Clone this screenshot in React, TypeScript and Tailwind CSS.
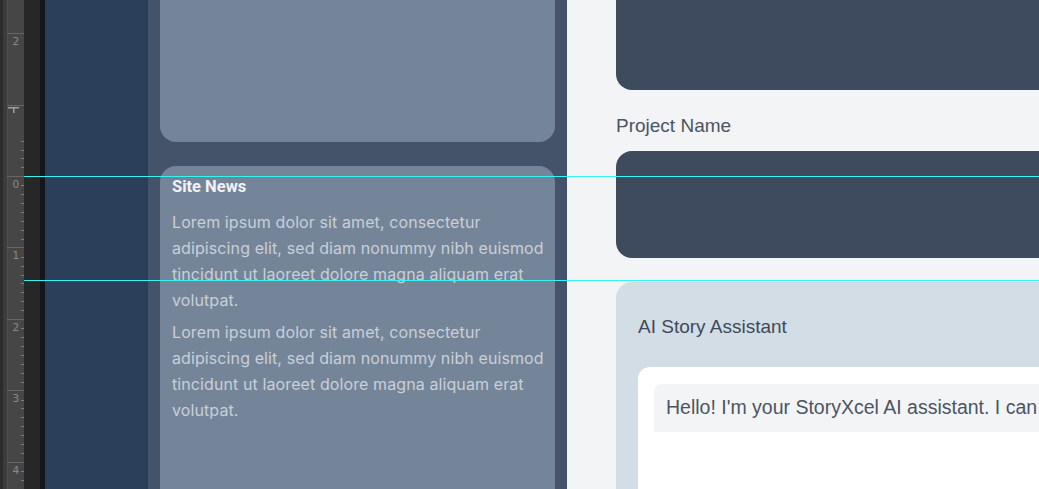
import React from "react";

const majors = [
  { y: 33, label: "2" },
  { y: 105, label: "" },
  { y: 176, label: "0" },
  { y: 247, label: "1" },
  { y: 319, label: "2" },
  { y: 390, label: "3" },
  { y: 462, label: "4" },
];

function Ruler() {
  const minors: number[] = [];
  for (let i = -4; i < 40; i++) {
    const y = 176.3 + i * 8.93;
    if (i % 8 !== 0 && y > 0 && y < 489) minors.push(y);
  }

  return (
    <svg width="24" height="489" className="shrink-0 block" viewBox="0 0 24 489">
      <rect x="0" y="0" width="3" height="489" fill="#2c2c2c" />
      <rect x="3" y="0" width="4" height="489" fill="#3b3b3b" />
      <rect x="7" y="0" width="17" height="489" fill="#464646" />
      <rect x="7" y="0" width="1" height="489" fill="#505050" />
      {minors.map((y) => (
        <rect key={y} x="21" y={Math.round(y)} width="3" height="1" fill="#7c7c7c" />
      ))}
      {majors.map((m) => (
        <g key={m.y}>
          <rect x="7" y={m.y} width="17" height="1" fill="#656565" />
          {m.label && (
            <text
              x="12.5"
              y={m.y + 12}
              fontSize="10.5"
              fill="#8a8a8a"
              fontFamily="'DejaVu Sans', sans-serif"
            >
              {m.label}
            </text>
          )}
        </g>
      ))}
      <rect x="8" y="107" width="11" height="1.5" fill="#a0a0a0" />
      <rect x="13" y="107" width="1.5" height="6" fill="#a0a0a0" />
    </svg>
  );
}

export default function App() {
  return (
    <div className="relative flex h-[489px] w-[1039px] overflow-hidden bg-[#f2f4f6]">
      <Ruler />
      <div className="w-4 shrink-0 bg-[#272727]" />
      <div className="w-[5px] shrink-0 bg-[#14161e]" />
      <div className="w-[103px] shrink-0 bg-[#2b3f5b]" />

      {/* left panel */}
      <div className="flex w-[419px] shrink-0 flex-col gap-6 bg-[#44536a] px-3">
        <div className="h-[142px] shrink-0 rounded-b-2xl bg-[#758599]" />
        <div className="flex-1 rounded-t-2xl bg-[#758599] pt-[11px] pr-1 pl-3">
          <h3 className="text-[16.5px] leading-5 font-bold text-[#f1f3f6] [font-family:Roboto,sans-serif]">
            Site News
          </h3>
          <p className="mt-3 text-[16px] leading-[26px] tracking-[0.1px] text-[#c8cfd8] [font-family:Inter,sans-serif]">
            Lorem ipsum dolor sit amet, consectetur adipiscing elit, sed diam nonummy nibh euismod
            tincidunt ut laoreet dolore magna aliquam erat volutpat.
          </p>
          <p className="mt-[6px] text-[16px] leading-[26px] tracking-[0.1px] text-[#c8cfd8] [font-family:Inter,sans-serif]">
            Lorem ipsum dolor sit amet, consectetur adipiscing elit, sed diam nonummy nibh euismod
            tincidunt ut laoreet dolore magna aliquam erat volutpat.
          </p>
        </div>
      </div>

      {/* right form */}
      <div className="min-w-0 flex-1 pl-[49px] [font-family:'Liberation_Sans',Arial,sans-serif]">
        <div className="w-[640px]">
          <div className="h-[90px] rounded-b-2xl bg-[#3e4b5f]" />
          <label className="mt-[22px] mb-[11px] block text-[19px] leading-7 text-[#4b5563]">
            Project Name
          </label>
          <div className="h-[107px] rounded-2xl bg-[#3e4b5f]" />
          <div className="mt-6 h-[260px] rounded-2xl bg-[#d3dde6] px-[22px] pt-[31px]">
            <h4 className="text-[19px] leading-7 text-[#3f4a5a]">AI Story Assistant</h4>
            <div className="mt-[26px] h-[200px] rounded-xl bg-white px-4 pt-[17px]">
              <div className="flex h-12 items-center whitespace-nowrap rounded-tl-lg bg-[#f3f4f6] px-3 text-[19.5px] text-[#4b5563]">
                Hello! I'm your StoryXcel AI assistant. I can help you develop your story.
              </div>
            </div>
          </div>
        </div>
      </div>

      {/* guides */}
      <div className="pointer-events-none absolute top-[176px] left-6 right-0 h-px bg-[#33f5f5]" />
      <div className="pointer-events-none absolute top-[280px] left-6 right-0 h-px bg-[#33f5f5]" />
    </div>
  );
}
